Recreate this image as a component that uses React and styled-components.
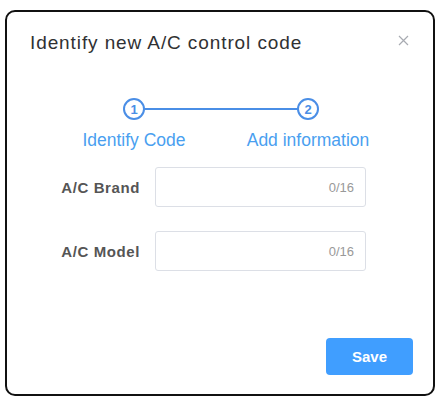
import React, { useState } from "react";
import styled, { createGlobalStyle } from "styled-components";

const GlobalStyle = createGlobalStyle`
  html, body {
    margin: 0;
    padding: 0;
    background: #ffffff;
  }
  body {
    font-family: "Liberation Sans", Arial, sans-serif;
  }
`;

const steps = ["Identify Code", "Add information"];

const fields = [
  { key: "brand", label: "A/C Brand" },
  { key: "model", label: "A/C Model" },
];

const App = () => {
  const [values, setValues] = useState({ brand: "", model: "" });

  const handleChange = (key) => (event) => {
    setValues({ ...values, [key]: event.target.value.slice(0, 16) });
  };

  return (
    <>
      <GlobalStyle />
      <Dialog>
        <Header>
          <Title>Identify new A/C control code</Title>
          <CloseButton aria-label="Close">
            <svg width="11" height="11" viewBox="0 0 11 11">
              <path
                d="M1 1 L10 10 M10 1 L1 10"
                stroke="#a8abb2"
                strokeWidth="1.2"
                fill="none"
              />
            </svg>
          </CloseButton>
        </Header>

        <Stepper>
          {steps.map((step, i) => (
            <Step key={step} $last={i === steps.length - 1}>
              <Circle>{i + 1}</Circle>
              <StepLabel>{step}</StepLabel>
            </Step>
          ))}
        </Stepper>

        <Form>
          {fields.map((field) => (
            <Row key={field.key}>
              <Label>{field.label}</Label>
              <InputBox>
                <Input
                  value={values[field.key]}
                  onChange={handleChange(field.key)}
                />
                <Counter>{values[field.key].length}/16</Counter>
              </InputBox>
            </Row>
          ))}
        </Form>

        <Footer>
          <SaveButton>Save</SaveButton>
        </Footer>
      </Dialog>
    </>
  );
};

const Dialog = styled.div`
  box-sizing: border-box;
  display: flex;
  flex-direction: column;
  width: 430px;
  height: 386px;
  margin: 10px 0 0 5px;
  border: 2px solid #111111;
  border-radius: 10px;
  background: #ffffff;
`;

const Header = styled.div`
  display: flex;
  justify-content: space-between;
  align-items: flex-start;
  padding: 20px 23px 0 23px;
`;

const Title = styled.div`
  font-size: 19px;
  line-height: 22px;
  letter-spacing: 0.9px;
  color: #303133;
`;

const CloseButton = styled.button`
  display: flex;
  align-items: center;
  justify-content: center;
  width: 14px;
  height: 14px;
  margin-top: 1px;
  padding: 0;
  border: none;
  background: none;
  cursor: pointer;
`;

const Stepper = styled.div`
  display: grid;
  grid-template-columns: 174px 174px;
  margin: 44px 0 0 40px;
`;

const Step = styled.div`
  position: relative;
  display: flex;
  flex-direction: column;
  align-items: center;

  &::after {
    content: "";
    display: ${(p) => (p.$last ? "none" : "block")};
    position: absolute;
    top: 10px;
    left: calc(50% + 10px);
    width: 154px;
    height: 2px;
    background: #4a8ee6;
  }
`;

const Circle = styled.div`
  box-sizing: border-box;
  display: flex;
  align-items: center;
  justify-content: center;
  width: 22px;
  height: 22px;
  border: 2px solid #4a8ee6;
  border-radius: 50%;
  font-size: 13px;
  font-weight: bold;
  color: #4a8ee6;
`;

const StepLabel = styled.div`
  margin-top: 10px;
  font-size: 17.5px;
  line-height: 20px;
  color: #4a9ff0;
`;

const Form = styled.div`
  display: flex;
  flex-direction: column;
  gap: 24px;
  margin-top: 17px;
  padding-left: 33px;
`;

const Row = styled.div`
  display: flex;
  align-items: center;
`;

const Label = styled.div`
  width: 100px;
  text-align: right;
  font-size: 15px;
  font-weight: bold;
  letter-spacing: 0.6px;
  color: #555555;
`;

const InputBox = styled.div`
  box-sizing: border-box;
  display: flex;
  align-items: center;
  width: 211px;
  height: 40px;
  margin-left: 15px;
  padding: 0 11px 0 12px;
  border: 1px solid #dcdfe6;
  border-radius: 3px;
`;

const Input = styled.input`
  flex: 1;
  min-width: 0;
  border: none;
  outline: none;
  font-family: "Liberation Sans", Arial, sans-serif;
  font-size: 14px;
  color: #303133;
  background: transparent;
`;

const Counter = styled.span`
  font-size: 13px;
  color: #999999;
`;

const Footer = styled.div`
  display: flex;
  justify-content: flex-end;
  margin-top: auto;
  padding: 0 20px 19px 0;
`;

const SaveButton = styled.button`
  width: 87px;
  height: 37px;
  border: none;
  border-radius: 4px;
  background: #409eff;
  color: #ffffff;
  font-family: "Liberation Sans", Arial, sans-serif;
  font-size: 15px;
  font-weight: bold;
  cursor: pointer;
`;

export default App;
